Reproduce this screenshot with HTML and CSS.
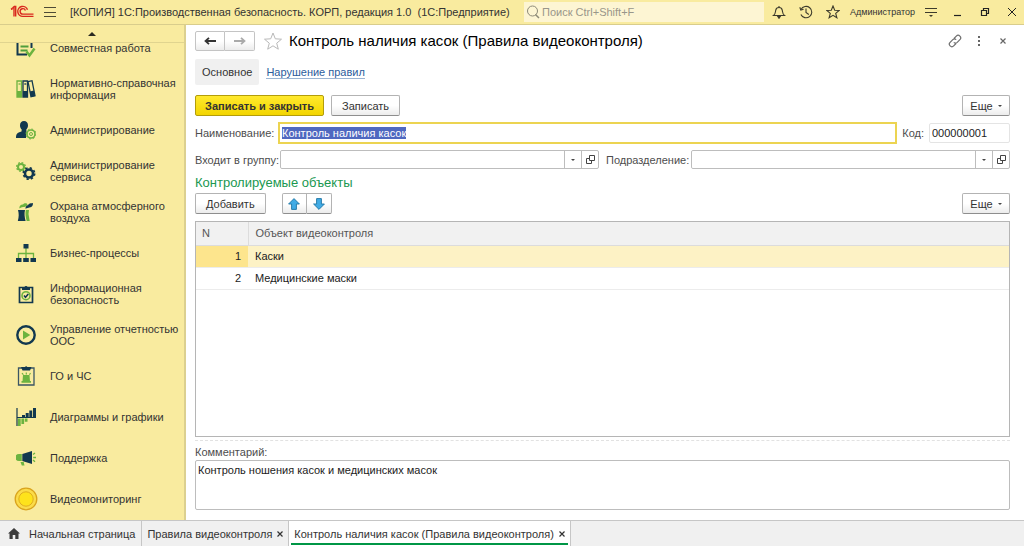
FILE: index.html
```html
<!DOCTYPE html>
<html lang="ru">
<head>
  <meta charset="UTF-8">
  <meta name="viewport" content="width=device-width, initial-scale=1.0">
  <title>Контроль наличия касок (Правила видеоконтроля)</title>
  <link rel="stylesheet" href="styles.css">
</head>
<body>
  <!-- Application title bar -->
  <header class="topbar">
    <svg class="logo" width="24" height="14" viewBox="0 0 24 14" fill="none" stroke="#d9281e" stroke-width="1.4">
      <path d="M1 4.2L4 2v9.600M1 4.200h1.500M5.700 11.600V1.500H4.300L3 2.500"/>
      <path d="M17.500 4.800A5 5 0 1 0 13 11.400H23.500"/>
      <path d="M15.400 5.500A2.700 2.700 0 1 0 13 9.100H23.500"/>
    </svg>
    <button class="icon-btn menu-btn" aria-label="Меню">
      <svg width="12" height="12" viewBox="0 0 12 12" stroke="#4d4a35" stroke-width="1"><path d="M0 1.500h12M0 6.500h12M0 10.500h12"/></svg>
    </button>
    <div class="app-title">[КОПИЯ] 1С:Производственная безопасность. КОРП, редакция 1.0&nbsp; (1С:Предприятие)</div>
    <label class="search">
      <svg width="14" height="14" viewBox="0 0 14 14" fill="none" stroke="#8d8a78"><circle cx="6.500" cy="6" r="5"/><path d="M9.500 9.500L13 13" stroke-width="1.500"/></svg>
      <input type="search" placeholder="Поиск Ctrl+Shift+F" aria-label="Поиск">
    </label>
    <div class="top-icons">
      <button class="icon-btn" aria-label="Уведомления">
        <svg width="14" height="14" viewBox="0 0 14 14" fill="none" stroke="#3d3b2c" stroke-width="1.100"><path d="M1.500 10.500C3.500 9 3.300 7.500 3.700 5.300 4 3.500 5 2.500 7 2.500s3 1 3.300 2.800c.4 2.200.2 3.700 2.200 5.200z"/><path d="M7 1v1.500"/><path d="M5.500 11h3L7 13.300z" fill="#3d3b2c"/></svg>
      </button>
      <button class="icon-btn" aria-label="История">
        <svg width="14" height="14" viewBox="0 0 14 14" fill="none" stroke="#3d3b2c" stroke-width="1.100"><path d="M2 4.500A5.700 5.700 0 1 1 1.900 9.500"/><path d="M.8 2.300L1.800 5l2.800-.7M7 3.500v4l2.800 2"/></svg>
      </button>
      <button class="icon-btn" aria-label="Избранное">
        <svg width="14" height="14" viewBox="0 0 14 14" fill="none" stroke="#3d3b2c" stroke-width="1.100"><path d="M7 1l1.700 4.200 4.500.3-3.500 2.900 1.200 4.400L7 10.400l-3.900 2.400 1.200-4.400L.8 5.500l4.500-.3z"/></svg>
      </button>
    </div>
    <a class="user" href="#">Администратор</a>
    <div class="window-icons">
      <button class="icon-btn" aria-label="Настройки">
        <svg width="12" height="12" viewBox="0 0 12 12" stroke="#3d3b2c"><path d="M0 2.500h12M0 6.500h12"/><path d="M4 9h4l-2 2z" fill="#3d3b2c" stroke="none"/></svg>
      </button>
      <button class="icon-btn" aria-label="Свернуть">
        <svg width="12" height="12" viewBox="0 0 12 12" stroke="#222" stroke-width="1.200"><path d="M2 9.500h7"/></svg>
      </button>
      <button class="icon-btn" aria-label="Развернуть">
        <svg width="12" height="12" viewBox="0 0 12 12" fill="none" stroke="#222" stroke-width="1.200"><path d="M2.500 4.500h5v5h-5zM4.500 4.500v-2h5v5h-2"/></svg>
      </button>
      <button class="icon-btn" aria-label="Закрыть">
        <svg width="12" height="12" viewBox="0 0 12 12" stroke="#222"><path d="M2 2l8 8M10 2l-8 8"/></svg>
      </button>
    </div>
  </header>

  <div class="workspace">
    <!-- Section panel -->
    <nav class="sidebar">
      <button class="scroll-up" aria-label="Прокрутить вверх"><svg width="8" height="4" viewBox="0 0 8 4"><path d="M0 4l4-4 4 4z" fill="#2b2a20"/></svg></button>
      <div class="sections">
        <a class="section" href="#">
          <svg class="section-icon" viewBox="0 0 20 20" fill="none"><path d="M5 2H1.500v14.500H11" stroke="#12384f" stroke-width="2"/><path d="M15.500 2v8" stroke="#12384f" stroke-width="2"/><path d="M4.500 8.500h8M4.500 12.500h7" stroke="#4f9d3c" stroke-width="2"/><path d="M10.500 13.500l3 4 5-7" stroke="#6cb33f" stroke-width="2.500"/></svg>
          <span>Совместная работа</span>
        </a>
        <a class="section" href="#">
          <svg class="section-icon" viewBox="0 0 20 20" fill="none" stroke-width="1.300"><path d="M1 2h4.500v16H1z" stroke="#6cb33f"/><path d="M1 12h4.500v6H1z" fill="#6cb33f"/><path d="M2.500 5h2" stroke="#6cb33f"/><path d="M7 2h4.500v16H7z" stroke="#12384f"/><path d="M7 12h4.500v6H7z" fill="#12384f"/><path d="M8.300 5h2" stroke="#12384f"/><path d="M12 2.600l4-.9 3 15-4 1z" stroke="#12384f"/><path d="M13.800 12.500l4-.9 1.200 5.400-4 1z" fill="#12384f"/></svg>
          <span>Нормативно-справочная информация</span>
        </a>
        <a class="section" href="#">
          <svg class="section-icon" viewBox="0 0 20 20"><path d="M8 1c2.500 0 4 1.700 4 4.200 0 2-.8 3.300-1.700 4.300l.2 2.500-.5 6H0c0-4 1-5.200 5.500-6.500l.2-2C4.700 8.500 4 7.200 4 5.200 4 2.700 5.500 1 8 1z" fill="#12384f"/><circle cx="15" cy="14" r="4" fill="#f9eb9f" stroke="#6cb33f" stroke-width="1.600"/><circle cx="15" cy="14" r="5" fill="none" stroke="#6cb33f" stroke-width="1" stroke-dasharray="1.800 2.100"/><circle cx="15" cy="14" r="1.500" fill="none" stroke="#6cb33f"/></svg>
          <span>Администрирование</span>
        </a>
        <a class="section" href="#">
          <svg class="section-icon" viewBox="0 0 20 20" fill="none"><circle cx="5" cy="6" r="3" stroke="#6cb33f" stroke-width="2"/><circle cx="5" cy="6" r="4.400" stroke="#6cb33f" stroke-width="1.300" stroke-dasharray="1.800 1.650"/><circle cx="13" cy="12.500" r="4" stroke="#12384f" stroke-width="2.600"/><circle cx="13" cy="12.500" r="5.700" stroke="#12384f" stroke-width="1.600" stroke-dasharray="2.300 2.180"/></svg>
          <span>Администрирование сервиса</span>
        </a>
        <a class="section" href="#">
          <svg class="section-icon" viewBox="0 0 20 20"><path d="M2 8h7c-.8 4-.5 6.500.6 11H1.800C3 14.500 3 12 2 8z" fill="#12384f"/><path d="M9.800 8H13l-.5 4 1.200 7h-3c-1-4-1.600-7-.9-11z" fill="#6cb33f"/><path d="M3.500 6.500C3 3.500 5.500 2.300 7 2.500 8 .8 11 .8 11.500 2.500 10 6 7 4 3.500 6.500z" fill="#6cb33f"/><path d="M9.500 6.800C9.500 3.500 11.500 3.500 12.500 2.500 14 .7 16 1.500 17 1c0 4-2 4-3.500 4.500-1.300.3-2.300.3-4 1.300z" fill="#12384f"/></svg>
          <span>Охрана атмосферного воздуха</span>
        </a>
        <a class="section" href="#">
          <svg class="section-icon" viewBox="0 0 20 20"><path d="M10 5v10M2.500 15v-4.500h15V15" fill="none" stroke="#6cb33f" stroke-width="1.300"/><path d="M7.500 1h5v4.500h-5zM0 15h5.500v4H0zM7.200 15h5.600v4H7.200zM14.500 15H20v4h-5.500z" fill="#12384f"/></svg>
          <span>Бизнес-процессы</span>
        </a>
        <a class="section" href="#">
          <svg class="section-icon" viewBox="0 0 20 20" fill="none"><path d="M3.500 3.500h13v15h-13z" stroke="#12384f" stroke-width="1.700"/><path d="M6 3h2.500a1.600 1.600 0 0 1 3 0H14v3H6z" fill="#12384f"/><circle cx="10" cy="11.700" r="4" stroke="#6cb33f" stroke-width="1.600"/><path d="M8 11.500l1.500 1.700 2.800-3.200" stroke="#12384f" stroke-width="1.600"/></svg>
          <span>Информационная безопасность</span>
        </a>
        <a class="section" href="#">
          <svg class="section-icon" viewBox="0 0 20 20"><circle cx="10" cy="10" r="8.700" fill="none" stroke="#12384f" stroke-width="2.400"/><path d="M7 5.500v9l7.300-4.500z" fill="#6cb33f"/></svg>
          <span>Управление отчетностью ООС</span>
        </a>
        <a class="section" href="#">
          <svg class="section-icon" viewBox="0 0 20 20"><path d="M2.500 2h15.500v17H2.500z" fill="none" stroke="#3b5664" stroke-width="1.300"/><path d="M5 1h4a1.300 1.300 0 0 1 2.300 0h4.200l-1.500 3.500H6.500z" fill="#12384f"/><path d="M7 9h6.500l.5 6.500H6.500zM5.500 15h9.500v1.800H5.500zM9.700 6.500h1.200v2H9.700zM5.500 7.500l1-.7 1.300 1.700-.8.500zM14 6.800l1 .7-1.200 1.500-.8-.5z" fill="#6cb33f"/></svg>
          <span>ГО и ЧС</span>
        </a>
        <a class="section" href="#">
          <svg class="section-icon" viewBox="0 0 20 20"><path d="M1 1v18M1 10.500h19" stroke="#12384f" stroke-width="1.200"/><path d="M6 8h3v2.500H6zM9.700 6h3v4.500h-3zM13.300 3.500h2.900v7h-2.900zM17 1h3v9.500h-3z" fill="#12384f"/><path d="M2 11.500h2.700v7.500H2zM5.400 11.500h2.700v5.500H5.400zM8.800 11.500h2.700v3.200H8.800z" fill="#6cb33f"/></svg>
          <span>Диаграммы и графики</span>
        </a>
        <a class="section" href="#">
          <svg class="section-icon" viewBox="0 0 20 20"><path d="M5.800 6v7H3a3.500 3.500 0 0 1 0-7z" fill="#6cb33f"/><path d="M4.500 14h3.200l.8 3.500H5.800z" fill="#6cb33f"/><path d="M6.300 6L16 3v13l-9.700-3z" fill="#12384f"/><path d="M17 6.500l2-1.500M17.200 9.500H20M17 12l2 1.800" stroke="#6cb33f" stroke-width="1.300"/></svg>
          <span>Поддержка</span>
        </a>
        <a class="section" href="#">
          <svg class="section-icon large" viewBox="0 0 24 24"><circle cx="12" cy="12" r="10.800" fill="#fbdc4a" stroke="#d9a31d" stroke-width="1.300"/><circle cx="12" cy="12" r="7.200" fill="#fee31c" stroke="#dfae20"/></svg>
          <span>Видеомониторинг</span>
        </a>
      </div>
    </nav>

    <!-- Item form -->
    <main class="form">
      <div class="form-header">
        <div class="btn-pair history">
          <button class="btn" aria-label="Назад"><svg width="12" height="8" viewBox="0 0 12 8" fill="none" stroke="#333" stroke-width="1.800"><path d="M12 4H2M5 .8L1.500 4 5 7.200"/></svg></button>
          <button class="btn" aria-label="Вперед"><svg width="12" height="8" viewBox="0 0 12 8" fill="none" stroke="#aaa" stroke-width="1.800"><path d="M0 4h10M7 .8L10.500 4 7 7.200"/></svg></button>
        </div>
        <button class="icon-btn favorite" aria-label="В избранное"><svg width="20" height="18" viewBox="0 0 20 18" fill="#fff" stroke="#b9b9b9"><path d="M10 1l2.300 5.800 6.200.4-4.800 4 1.600 6L10 13.800 4.700 17.200l1.600-6-4.800-4 6.200-.4z"/></svg></button>
        <h1>Контроль наличия касок (Правила видеоконтроля)</h1>
        <div class="form-tools">
          <button class="icon-btn" aria-label="Ссылка"><svg width="14" height="14" viewBox="0 0 14 14" fill="none" stroke="#6e6e6e" stroke-width="1.200"><path d="M6 4.500l2.300-2.400a2.500 2.500 0 0 1 3.600 3.600L9.200 8.400a2.500 2.500 0 0 1-3.400 0M8 9.500l-2.300 2.400a2.500 2.500 0 0 1-3.600-3.600l2.700-2.700a2.500 2.500 0 0 1 3.400 0"/></svg></button>
          <button class="icon-btn" aria-label="Еще действия"><svg width="14" height="14" viewBox="0 0 14 14" fill="#666"><path d="M6 2h2v2H6zM6 6h2v2H6zM6 10h2v2H6z"/></svg></button>
          <button class="icon-btn" aria-label="Закрыть форму"><svg width="14" height="14" viewBox="0 0 14 14" stroke="#666" stroke-width="1.200"><path d="M4.500 4.500l5 5M9.500 4.500l-5 5"/></svg></button>
        </div>
      </div>

      <div class="form-nav">
        <a class="nav-item current" href="#">Основное</a>
        <a class="nav-item" href="#"><span>Нарушение правил</span></a>
      </div>

      <div class="commands">
        <button class="btn primary">Записать и закрыть</button>
        <button class="btn">Записать</button>
        <button class="btn more">Еще<i class="caret"></i></button>
      </div>

      <div class="row name-row">
        <label class="caption" for="name">Наименование:</label>
        <input class="name-input" id="name" type="text" value="Контроль наличия касок">
        <label for="code">Код:</label>
        <input class="code-input" id="code" type="text" value="000000001">
      </div>

      <div class="row">
        <label class="caption" for="group">Входит в группу:</label>
        <div class="picker">
          <input id="group" type="text">
          <button aria-label="Выбрать группу"><i class="caret"></i></button>
          <button aria-label="Открыть группу"><svg width="9" height="9" viewBox="0 0 9 9" fill="none" stroke="#444"><path d="M3.500.5h5v5h-5zM3.500 3.500h-3v5h5v-3"/></svg></button>
        </div>
        <label class="caption" for="department">Подразделение:</label>
        <div class="picker">
          <input id="department" type="text">
          <button aria-label="Выбрать подразделение"><i class="caret"></i></button>
          <button aria-label="Открыть подразделение"><svg width="9" height="9" viewBox="0 0 9 9" fill="none" stroke="#444"><path d="M3.500.5h5v5h-5zM3.500 3.500h-3v5h5v-3"/></svg></button>
        </div>
      </div>

      <h2>Контролируемые объекты</h2>
      <div class="commands table-commands">
        <button class="btn">Добавить</button>
        <div class="btn-pair move">
          <button class="btn" aria-label="Вверх"><svg width="12" height="12" viewBox="0 0 10 10" fill="#41abe5" stroke="#2479a8" stroke-width=".8"><path d="M5 .5L9.500 5H7v4.500H3V5H.5z"/></svg></button>
          <button class="btn" aria-label="Вниз"><svg width="12" height="12" viewBox="0 0 10 10" fill="#41abe5" stroke="#2479a8" stroke-width=".8"><path d="M5 9.500L9.500 5H7V.5H3V5H.5z"/></svg></button>
        </div>
        <button class="btn more">Еще<i class="caret"></i></button>
      </div>

      <div class="table-box">
        <table>
          <thead>
            <tr><th class="num">N</th><th>Объект видеоконтроля</th></tr>
          </thead>
          <tbody>
            <tr class="selected"><td class="num">1</td><td>Каски</td></tr>
            <tr><td class="num">2</td><td>Медицинские маски</td></tr>
          </tbody>
        </table>
      </div>

      <div class="comment">
        <label for="comment">Комментарий:</label>
        <textarea id="comment">Контроль ношения касок и медицинских масок</textarea>
      </div>
    </main>
  </div>

  <!-- Open windows -->
  <footer class="taskbar">
    <a class="tab home" href="#"><svg width="12" height="11" viewBox="0 0 12 11" fill="#3c3c3c"><path d="M6 0l6 5.500h-1.500V11H7.300V7H4.700v4H1.500V5.500H0z"/></svg>Начальная страница</a>
    <a class="tab" href="#">Правила видеоконтроля<svg width="6" height="6" viewBox="0 0 6 6" stroke="#333" stroke-width="1.200"><path d="M.5.5l5 5M5.500.5l-5 5"/></svg></a>
    <a class="tab active" href="#">Контроль наличия касок (Правила видеоконтроля)<svg width="6" height="6" viewBox="0 0 6 6" stroke="#333" stroke-width="1.200"><path d="M.5.5l5 5M5.500.5l-5 5"/></svg></a>
  </footer>

  <script src="script.js"></script>
</body>
</html>
```
FILE: styles.css
```css
* {
  margin: 0;
  padding: 0;
  box-sizing: border-box;
}
body {
  display: flex;
  flex-direction: column;
  height: 100vh;
  overflow: hidden;
  font-family: "Liberation Sans", Arial, sans-serif;
  font-size: 11px;
  line-height: 12px;
  color: #333;
  background: #fff;
}
button, input, textarea {
  font: inherit;
  color: inherit;
}
a {
  color: inherit;
  text-decoration: none;
}
svg {
  display: block;
  flex: none;
}
.icon-btn {
  display: flex;
  align-items: center;
  justify-content: center;
  background: none;
  border: none;
}

/* Title bar */
.topbar {
  display: flex;
  align-items: center;
  flex: none;
  height: 25px;
  padding: 0 6px 0 10px;
  background: #f9eb9f;
  border-bottom: 1px solid #d9cd8c;
}
.menu-btn {
  margin: 0 14px 0 10px;
}
.app-title {
  flex: 1;
  white-space: nowrap;
}
.search {
  display: flex;
  align-items: center;
  gap: 2px;
  width: 240px;
  height: 20px;
  padding: 0 2px;
  background: #fdf5d3;
}
.search input {
  flex: 1;
  min-width: 0;
  background: none;
  border: none;
  outline: none;
}
.search input::placeholder {
  color: #99968a;
}
.top-icons {
  display: flex;
  gap: 13px;
  margin: 0 10px 0 8px;
}
.user {
  font-size: 9px;
}
.window-icons {
  display: flex;
  gap: 15px;
  margin-left: 10px;
}

/* Section panel */
.workspace {
  display: flex;
  flex: 1;
  min-height: 0;
}
.sidebar {
  display: flex;
  flex-direction: column;
  flex: none;
  width: 186px;
  background: #f9eb9f;
  border-right: 2px solid #dcd08f;
}
.scroll-up {
  display: flex;
  align-items: center;
  justify-content: center;
  flex: none;
  height: 18px;
  background: none;
  border: none;
  border-bottom: 1px solid #e0d48f;
}
.sections {
  display: flex;
  flex-direction: column;
  justify-content: flex-end;
  flex: 1;
  min-height: 0;
  padding-bottom: 1px;
  overflow: hidden;
}
.section {
  display: flex;
  align-items: center;
  flex: none;
  gap: 14px;
  height: 41px;
  padding-left: 16px;
}
.section-icon {
  width: 20px;
  height: 20px;
}
.section-icon.large {
  width: 24px;
  height: 24px;
  margin: 0 -2px;
}

/* Form */
.form {
  display: flex;
  flex-direction: column;
  flex: 1;
  min-width: 0;
  padding: 6px 14px 10px 9px;
}
.form-header {
  display: flex;
  align-items: center;
  height: 20px;
}
.btn {
  display: flex;
  align-items: center;
  justify-content: center;
  height: 21px;
  padding: 0 10px;
  background: linear-gradient(#fff 50%, #ececec);
  border: 1px solid #b3b3b3;
  border-bottom-color: #8e8e8e;
  border-radius: 2px;
}
.btn.primary {
  padding: 0 9px;
  font-weight: bold;
  background: linear-gradient(#ffe92e, #f3d500);
  border-color: #b39d0a;
}
.btn.more {
  gap: 5px;
  width: 48px;
  margin-left: auto;
}
.caret {
  border: 2px solid transparent;
  border-top-color: #444;
  border-bottom-width: 0;
}
.btn-pair {
  display: flex;
}
.btn-pair .btn {
  padding: 0;
}
.btn-pair .btn:first-child {
  border-radius: 2px 0 0 2px;
}
.btn-pair .btn:last-child {
  border-left: none;
  border-radius: 0 2px 2px 0;
}
.history .btn {
  width: 30px;
  height: 20px;
  border-color: #c4c4c4;
}
.move .btn {
  width: 25px;
}
.favorite {
  margin: 0 6px 0 8px;
}
h1 {
  font-size: 15px;
  font-weight: normal;
  line-height: 20px;
  color: #000;
}
.form-tools {
  display: flex;
  gap: 10px;
  margin-left: auto;
}
.form-nav {
  display: flex;
  margin-top: 8px;
}
.nav-item {
  padding: 7px;
  color: #2c5d9c;
}
.nav-item span {
  border-bottom: 1px solid #9bb5d3;
}
.nav-item.current {
  color: #333;
  background: #f0f0f0;
  border-radius: 2px;
}
.commands {
  display: flex;
  gap: 7px;
  margin-top: 10px;
}
.row {
  display: flex;
  align-items: center;
  gap: 7px;
  margin-top: 6px;
  color: #4d4d4d;
}
.name-row {
  gap: 5px;
}
.caption {
  flex: none;
  width: 78px;
  white-space: nowrap;
}
.row input {
  min-width: 0;
  height: 20px;
  padding: 0 2px;
  color: #222;
  border: 1px solid #bdbdbd;
  border-radius: 2px;
}
.row .name-input {
  flex: 1;
  height: 22px;
  border: 2px solid #ecd451;
  border-radius: 0;
  outline: none;
}
.name-input::selection {
  color: #fff;
  background: #4f68c0;
}
.row .code-input {
  width: 81px;
  border-color: #e4e4e4;
}
.picker {
  display: flex;
  flex: 1;
  height: 19px;
  border: 1px solid #bdbdbd;
  border-radius: 2px;
}
.picker input {
  flex: 1;
  height: auto;
  border: none;
}
.picker button {
  display: flex;
  align-items: center;
  justify-content: center;
  width: 17px;
  background: none;
  border: none;
  border-left: 1px solid #bdbdbd;
}
h2 {
  margin-top: 6px;
  font-size: 13px;
  font-weight: normal;
  line-height: 16px;
  color: #1a9850;
}
.table-commands {
  gap: 16px;
  margin-top: 2px;
}

/* Controlled objects */
.table-box {
  flex: 1;
  min-height: 0;
  margin-top: 7px;
  border: 1px solid #b5b5b5;
}
table {
  width: 100%;
  border-collapse: collapse;
}
th, td {
  height: 22px;
  padding: 0 7px;
  text-align: left;
  border-bottom: 1px solid #ececec;
}
th {
  height: 23px;
  font-weight: normal;
  color: #555;
  background: #f1f1f1;
  border-bottom-color: #dcdcdc;
}
th.num {
  width: 52px;
  padding-left: 6px;
  border-right: 1px solid #dcdcdc;
}
td.num {
  text-align: right;
}
td {
  color: #222;
}
.selected td {
  background: #fdf2c5;
}
.selected .num {
  background: #fde58d;
}

/* Comment */
.comment {
  display: flex;
  flex-direction: column;
  gap: 2px;
  margin-top: 3px;
  padding-top: 5px;
  color: #4d4d4d;
  border-top: 1px dashed #e2e2e2;
}
.comment textarea {
  height: 50px;
  padding: 3px 2px;
  color: #222;
  border: 1px solid #bdbdbd;
  border-radius: 2px;
  resize: none;
}

/* Open windows */
.taskbar {
  display: flex;
  flex: none;
  height: 26px;
  background: #f0f0f0;
  border-top: 1px solid #c6c6c6;
}
.tab {
  display: flex;
  align-items: center;
  gap: 5px;
  padding: 0 5px;
  border-right: 1px solid #c6c6c6;
}
.tab.home {
  gap: 9px;
  padding: 0 6px 0 8px;
}
.tab.active {
  background: linear-gradient(#009646, #009646) 2px 22px / calc(100% - 4px) 2px no-repeat #fff;
}
```
FILE: script.js
```js
// Focus the name field and select its text when the form opens
const nameInput = document.getElementById("name");
nameInput.focus();
nameInput.select();
```
